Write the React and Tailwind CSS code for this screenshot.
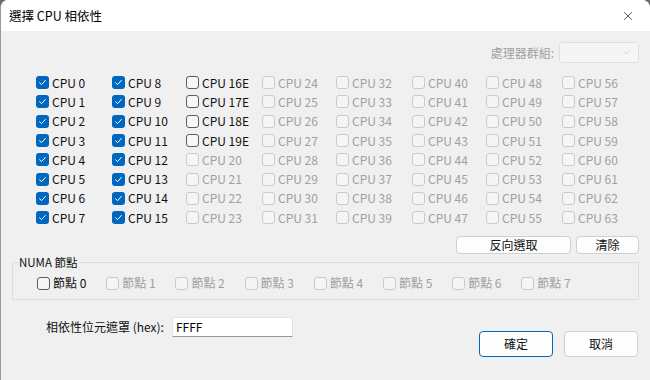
import { X, ChevronDown } from 'lucide-react'

const CHECKED = Array.from({ length: 16 }, (_, i) => i)
const ENABLED_UNCHECKED = [16, 17, 18, 19]

function cpuLabel(n) {
  return ENABLED_UNCHECKED.includes(n) ? `CPU ${n}E` : `CPU ${n}`
}

function Box({ checked, disabled }) {
  if (checked) {
    return (
      <span className="flex h-[13px] w-[13px] shrink-0 items-center justify-center rounded-[3px] bg-[#0067c0]">
        <svg width="9" height="9" viewBox="0 0 9 9" fill="none">
          <path d="M1.6 4.8 L3.6 6.6 L7.4 2.4" stroke="white" strokeWidth="1" strokeLinecap="round" strokeLinejoin="round" />
        </svg>
      </span>
    )
  }
  return (
    <span
      className={
        disabled
          ? 'h-[13px] w-[13px] shrink-0 rounded-[3px] border border-[#cacaca] bg-[#f5f5f5]'
          : 'h-[13px] w-[13px] shrink-0 rounded-[3px] border border-[#5e5e5e] bg-[#f7f7f7]'
      }
    />
  )
}

function Check({ label, checked, disabled }) {
  return (
    <div className="flex items-center gap-[3px]">
      <Box checked={checked} disabled={disabled} />
      <span className={disabled ? 'text-[12px] leading-[14px] text-[#a0a0a0]' : 'text-[12px] leading-[14px] text-[#111]'}>
        {label}
      </span>
    </div>
  )
}

export default function App() {
  const cpus = []
  for (let col = 0; col < 8; col++) {
    for (let row = 0; row < 8; row++) {
      cpus.push(col * 8 + row)
    }
  }

  return (
    <div className="h-[380px] w-[650px] bg-[#6b6b6b] font-['Noto_Sans_CJK_TC',sans-serif]">
      <div className="flex h-[380px] w-[650px] flex-col overflow-hidden rounded-t-[8px] border-l border-[#9a9a9a] bg-[#f0f0f0]">
        {/* title bar */}
        <div className="flex h-[31px] shrink-0 items-center justify-between bg-white pl-[8px] pr-[15px]">
          <span className="text-[12.5px] leading-[16px] text-black">選擇 CPU 相依性</span>
          <X size={14} strokeWidth={1.3} className="text-[#222]" />
        </div>

        {/* group selector */}
        <div className="mt-[11px] flex items-center justify-end gap-[5px] pr-[11px]">
          <span className="text-[12px] leading-[14px] text-[#a0a0a0]">處理器群組:</span>
          <div className="flex h-[21px] w-[80px] items-center justify-end rounded-[3px] border border-[#e0e0e0] bg-[#f5f5f5] pr-[6px]">
            <ChevronDown size={11} strokeWidth={1.2} className="text-[#b5b5b5]" />
          </div>
        </div>

        {/* cpu grid */}
        <div className="mt-[10px] grid grid-flow-col grid-cols-[76px_74px_76px_74px_76px_74px_76px_75px] grid-rows-[repeat(8,19.3px)] pl-[35px]">
          {cpus.map((n) => (
            <div key={n} className="flex items-center">
              <Check label={cpuLabel(n)} checked={CHECKED.includes(n)} disabled={n >= 20} />
            </div>
          ))}
        </div>

        {/* invert / clear */}
        <div className="mt-[9px] flex justify-end gap-[5px] pr-[11px]">
          <button className="h-[18px] w-[115px] rounded-[4px] border border-[#d0d0d0] bg-[#fdfdfd] text-[12px] leading-[14px] text-[#111]">
            反向選取
          </button>
          <button className="h-[18px] w-[63px] rounded-[4px] border border-[#d0d0d0] bg-[#fdfdfd] text-[12px] leading-[14px] text-[#111]">
            清除
          </button>
        </div>

        {/* NUMA group box */}
        <div className="relative mx-[11px] mt-[8px] h-[38px] rounded-[1px] border border-[#dcdcdc]">
          <span className="absolute left-[5px] top-[-8px] bg-[#f0f0f0] px-[1px] text-[11.5px] leading-[14px] text-[#111]">
            NUMA 節點
          </span>
          <div className="grid grid-cols-[repeat(8,69.2px)] pl-[24px] pt-[13px]">
            {Array.from({ length: 8 }, (_, i) => (
              <Check key={i} label={`節點 ${i}`} checked={false} disabled={i > 0} />
            ))}
          </div>
        </div>

        {/* mask + actions */}
        <div className="mt-[17px] flex items-start pl-[45px] pr-[12px]">
          <div className="flex items-center gap-[8px]">
            <span className="text-[12px] leading-[14px] text-[#111]">相依性位元遮罩 (hex):</span>
            <div className="flex h-[20px] w-[121px] items-center border border-[#e3e3e3] border-b-[#9a9a9a] bg-white pl-[3px] text-[12px] leading-[14px] text-black">
              FFFF
            </div>
          </div>
          <div className="ml-auto mt-[14px] flex gap-[11px]">
            <button className="h-[26px] w-[74px] rounded-[4px] border border-[#0067c0] bg-[#fdfdfd] text-[12px] leading-[14px] text-[#111]">
              確定
            </button>
            <button className="h-[26px] w-[74px] rounded-[4px] border border-[#d0d0d0] bg-[#fdfdfd] text-[12px] leading-[14px] text-[#111]">
              取消
            </button>
          </div>
        </div>
      </div>
    </div>
  )
}
